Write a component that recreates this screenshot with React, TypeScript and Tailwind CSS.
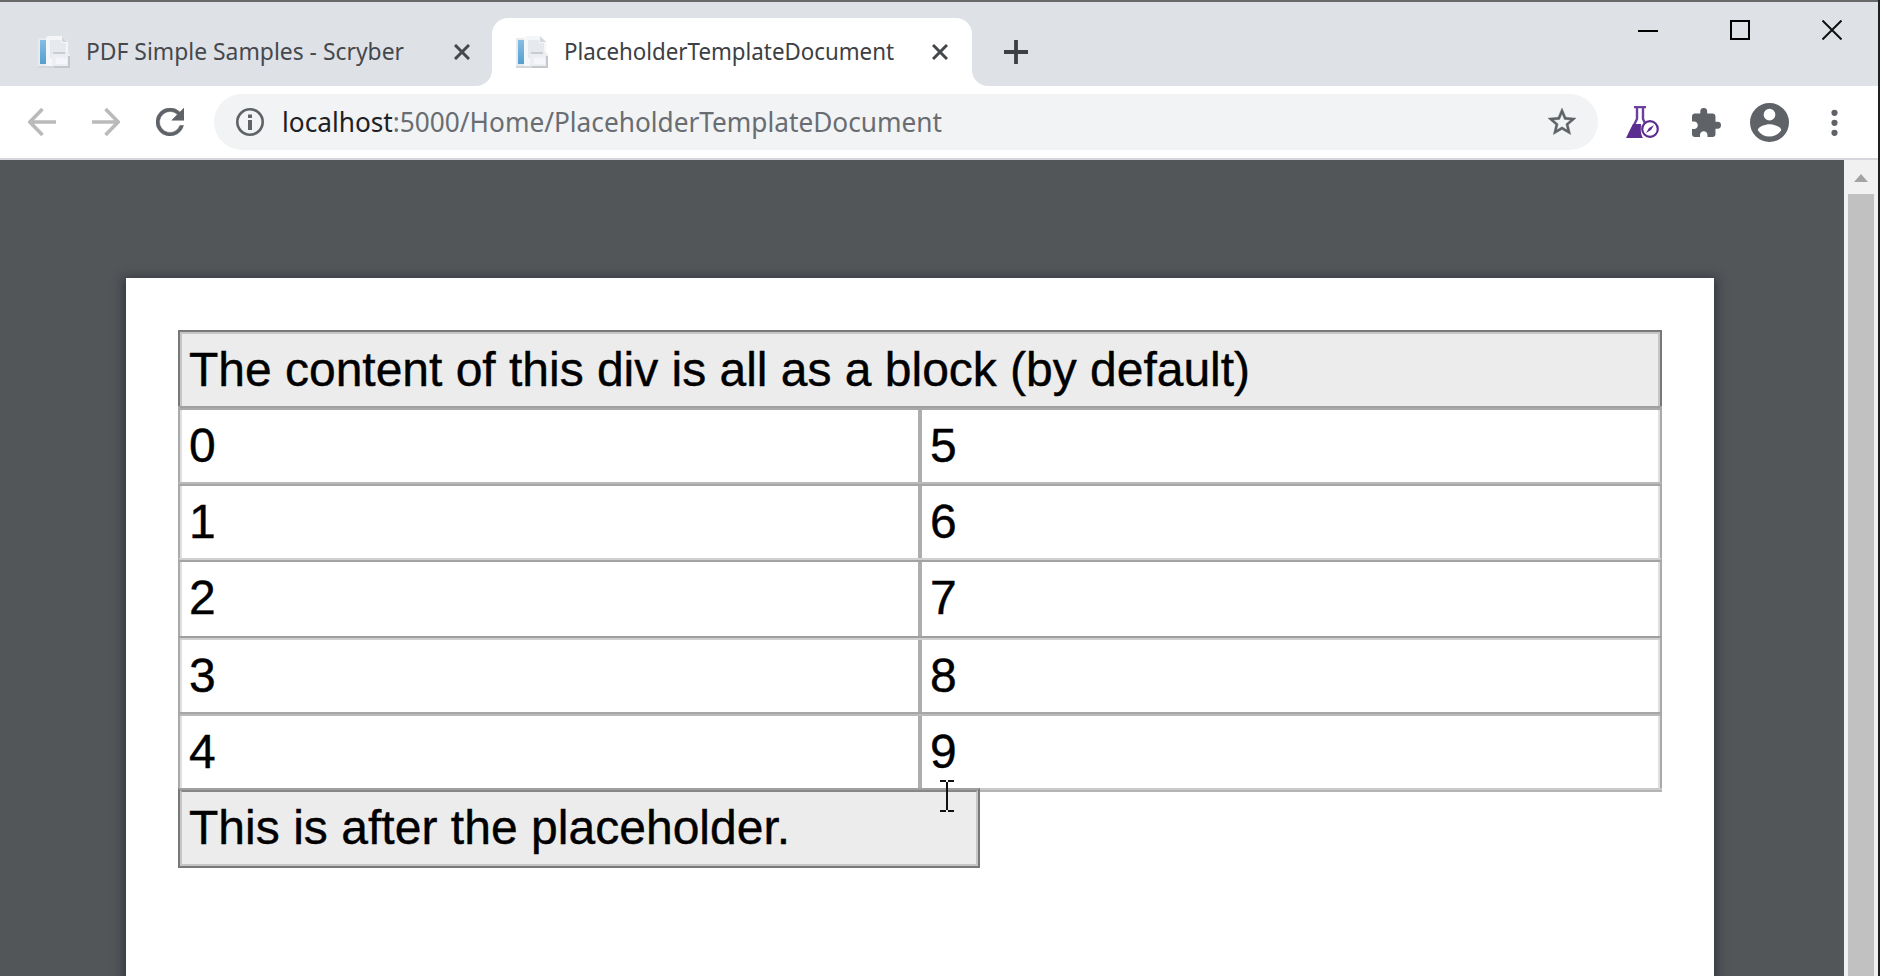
import React from "react";

const Favicon = ({ id }: { id: string }) => (
  <svg className="block h-[32px] w-[32px] shrink-0" viewBox="0 0 32 32">
    <defs>
      <linearGradient id={id} x1="0" y1="0" x2="0" y2="1">
        <stop offset="0" stopColor="#86bde3" />
        <stop offset="1" stopColor="#549fd0" />
      </linearGradient>
    </defs>
    <path d="M0 2h10v30H0z" fill="#e8ebee" />
    <path d="M2 4h6v24H2z" fill={`url(#${id})`} />
    <path d="M8 2l2-2h14l6 5v26H8z" fill="#f5f6f8" />
    <path d="M24 0l6 6h-6z" fill="#d6d8db" />
    <path d="M12 4h11v3h5v9H16v6h-4z" fill="#e6e9ee" />
    <path d="M14 18l2-2h14l2 3v13H14z" fill="#eceef1" />
    <path d="M15 16h12v2H15z" fill="#c9ccd1" />
    <path d="M18 22h11v6H18z" fill="#f5f6fb" />
    <path d="M0 30h16v2H0z" fill="#d3d6da" />
    <path d="M16 30h16v2H16zM30 20h2v10h-2z" fill="#c4c7cb" />
  </svg>
);

const TabClose = () => (
  <svg className="block h-[16px] w-[16px] shrink-0" viewBox="0 0 16 16">
    <path d="M1 1l14 14M15 1L1 15" stroke="#45484c" strokeWidth="3" fill="none" />
  </svg>
);

const rows = [
  { left: "0", right: "5", height: "h-[76px]", line: "border-t-[#a0a0a0]", inner: "border-t-[#a9a9a9]" },
  { left: "1", right: "6", height: "h-[76px]", line: "border-t-[#bababa]", inner: "border-t-[#a6a6a6]" },
  { left: "2", right: "7", height: "h-[78px]", line: "border-t-[#d0d0d0]", inner: "border-t-[#a3a3a3]" },
  { left: "3", right: "8", height: "h-[76px]", line: "border-t-[#9f9f9f]", inner: "border-t-[#cfcfcf]" },
  { left: "4", right: "9", height: "h-[76px]", line: "border-t-[#a6a6a6]", inner: "border-t-[#bababa]" },
];

function TabStrip() {
  return (
    <div className="flex h-[84px] items-end bg-[#dee1e6]">
      <div className="flex h-[68px] w-[492px] items-center pl-[38px]">
        <Favicon id="spine-a" />
        <svg className="ml-[16px] block h-[40px] w-[322px] shrink-0 overflow-visible">
          <text x="0" y="28" textLength="318" lengthAdjust="spacingAndGlyphs" fontSize="24" fill="#45484d">PDF Simple Samples - Scryber</text>
        </svg>
        <span className="ml-[46px]"><TabClose /></span>
      </div>
      <div className="relative flex h-[68px] w-[480px] items-center rounded-t-[16px] bg-white pl-[24px]">
        <svg className="absolute bottom-0 left-[-16px] h-[16px] w-[16px]" viewBox="0 0 16 16"><path d="M16 0v16H0A16 16 0 0 0 16 0z" fill="#fff" /></svg>
        <svg className="absolute right-[-16px] bottom-0 h-[16px] w-[16px]" viewBox="0 0 16 16"><path d="M0 0v16h16A16 16 0 0 1 0 0z" fill="#fff" /></svg>
        <Favicon id="spine-b" />
        <svg className="ml-[16px] block h-[40px] w-[332px] shrink-0 overflow-visible">
          <text x="0" y="28" textLength="330" lengthAdjust="spacingAndGlyphs" fontSize="24" fill="#3c4043">PlaceholderTemplateDocument</text>
        </svg>
        <span className="ml-[36px]"><TabClose /></span>
      </div>
      <div className="flex h-[68px] items-center pl-[32px]">
        <svg className="block h-[24px] w-[24px]" viewBox="0 0 24 24"><path d="M12 0v24M0 12h24" stroke="#3c4043" strokeWidth="3.8" /></svg>
      </div>
      <div className="ml-auto flex h-[84px] items-start gap-[72px] pt-[18px] pr-[36px]">
        <svg className="block h-[20px] w-[20px]" viewBox="0 0 20 20"><path d="M0 11h20" stroke="#000" strokeWidth="2" /></svg>
        <svg className="block h-[20px] w-[20px]" viewBox="0 0 20 20"><path d="M1 1h18v18H1z" stroke="#000" strokeWidth="2" fill="none" /></svg>
        <svg className="block h-[20px] w-[20px]" viewBox="0 0 20 20"><path d="M0.5 0.5l19 19M19.5 0.5l-19 19" stroke="#111" strokeWidth="2" /></svg>
      </div>
    </div>
  );
}

function Toolbar() {
  return (
    <div className="flex h-[74px] items-center border-b-2 border-[#d5d7dc] bg-white pl-[28px]">
      <svg className="block h-[28px] w-[28px]" viewBox="0 0 28 28"><path d="M28 14H3M14.5 1L1.8 14l12.7 13" stroke="#bababa" strokeWidth="3.6" fill="none" /></svg>
      <svg className="ml-[36px] block h-[28px] w-[28px]" viewBox="0 0 28 28"><path d="M0 14h25M13.5 1l12.7 13-12.7 13" stroke="#bababa" strokeWidth="3.6" fill="none" /></svg>
      <svg className="ml-[36px] block h-[28px] w-[28px]" viewBox="4 4 16 16"><path fill="#5f6368" d="M17.65 6.35A7.96 7.96 0 0 0 12 4a8 8 0 1 0 7.73 10h-2.08A6 6 0 1 1 12 6c1.66 0 3.14.69 4.22 1.78L13 11h7V4z" stroke="#5f6368" strokeWidth="0.3" /></svg>
      <div className="ml-[30px] flex h-[56px] w-[1384px] items-center rounded-full bg-[#f1f3f4] pl-[22px]">
        <svg className="block h-[28px] w-[28px]" viewBox="0 0 28 28"><circle cx="14" cy="14" r="12.7" stroke="#5f6368" strokeWidth="2.6" fill="none" /><path d="M12 6.5h4v3.5h-4zM12 12h4v10h-4z" fill="#5f6368" /></svg>
        <svg className="ml-[18px] block h-[44px] w-[664px] overflow-visible">
          <text x="0" y="32" textLength="660" lengthAdjust="spacingAndGlyphs" fontSize="28" fill="#696d72"><tspan fill="#202124">localhost</tspan>:5000/Home/PlaceholderTemplateDocument</text>
        </svg>
        <svg className="ml-auto mr-[22px] block h-[28px] w-[28px]" viewBox="2 2 20 20"><path fill="#5f6368" stroke="#5f6368" strokeWidth="0.3" d="M22 9.24l-7.19-.62L12 2 9.19 8.63 2 9.24l5.46 4.73L5.82 21 12 17.27 18.18 21l-1.63-7.03L22 9.24zM12 15.4l-3.76 2.27 1-4.28-3.32-2.88 4.38-.38L12 6.1l1.71 4.04 4.38.38-3.32 2.88 1 4.28L12 15.4z" /></svg>
      </div>
      <svg className="ml-[28px] block h-[32px] w-[33px]" viewBox="0 0 33 32">
        <path d="M8 1h12M11 2v11L3 29M17 2v11l2 4" stroke="#6b3fa0" strokeWidth="2.4" fill="none" />
        <path d="M0 32L7 18h8c0 4-1 9 2 14z" fill="#5c2d91" />
        <circle cx="24" cy="23" r="7.8" fill="#fff" stroke="#5c2d91" strokeWidth="2.2" />
        <path d="M20 27l3-5 5-3-3 5z" fill="#5c2d91" />
      </svg>
      <svg className="ml-[33px] block h-[29px] w-[29px]" viewBox="2 1 21 21"><path fill="#5f6368" d="M20.5 11H19V7c0-1.1-.9-2-2-2h-4V3.5a2.5 2.5 0 0 0-5 0V5H4c-1.1 0-1.99.9-1.99 2v3.8H3.5c1.49 0 2.7 1.21 2.7 2.7s-1.21 2.7-2.7 2.7H2V20c0 1.1.9 2 2 2h3.8v-1.5c0-1.49 1.21-2.7 2.7-2.7s2.7 1.21 2.7 2.7V22H17c1.1 0 2-.9 2-2v-4h1.5a2.5 2.5 0 0 0 0-5z" /></svg>
      <svg className="ml-[29px] block h-[39px] w-[39px]" viewBox="2 2 20 20"><path fill="#5f6368" d="M12 2a10 10 0 1 0 0 20 10 10 0 0 0 0-20zm0 3a3 3 0 1 1 0 6 3 3 0 0 1 0-6zm0 14.2a7.2 7.2 0 0 1-6-3.22c.03-1.99 4-3.08 6-3.08s5.97 1.09 6 3.08a7.2 7.2 0 0 1-6 3.22z" /></svg>
      <svg className="ml-[42px] block h-[27px] w-[7px]" viewBox="0 0 7 27"><g fill="#5f6368"><circle cx="3.5" cy="3.8" r="3.1" /><circle cx="3.5" cy="13.8" r="3.1" /><circle cx="3.5" cy="23.8" r="3.1" /></g></svg>
    </div>
  );
}

export default function App() {
  return (
    <div className="flex h-[976px] w-[1880px] overflow-hidden bg-[#1f2022] font-['Noto_Sans',sans-serif]">
      <div className="flex w-[1878px] flex-col">
        <div className="h-[2px] bg-[#696969]" />
        <TabStrip />
        <Toolbar />
        <div className="flex min-h-0 flex-1">
          <div className="h-full w-[1844px] overflow-hidden bg-[#525659] pt-[118px] pl-[126px] font-['Liberation_Sans',sans-serif] text-[48px] text-black [-webkit-text-stroke:0.4px_#000]">
            <div className="h-[760px] w-[1588px] bg-white pt-[52px] pl-[52px] shadow-[0_2px_10px_2px_rgba(20,20,30,0.55)]">
              <div className="relative w-[1484px]">
                <div className="h-[76px] border-x-2 border-t-2 border-[#787878] bg-[#ececec]">
                  <div className="flex h-full items-center border-x-2 border-t-2 border-[#c6c6c6] pl-[7px]">
                    <span className="leading-none tracking-[-0.015px] whitespace-nowrap">The content of this div is all as a block (by default)</span>
                  </div>
                </div>
                {rows.map((r) => (
                  <div key={r.left} className={`border-x-2 border-t-2 border-x-[#a9a9a9] ${r.line} ${r.height}`}>
                    <div className={`flex h-full border-t-2 ${r.inner}`}>
                      <div className="w-[738px] border-l-2 border-[#e0e0e0] pt-[12px] pl-[7px] leading-none">{r.left}</div>
                      <div className="flex-1 border-r-2 border-l-4 border-r-[#e0e0e0] border-l-[#adadad] pt-[12px] pl-[8px] leading-none">{r.right}</div>
                    </div>
                  </div>
                ))}
                <div className="h-[4px] border-t-2 border-b-2 border-t-[#cacaca] border-b-[#b4b4b4]" />
                <div className="relative -mt-[4px] h-[80px] w-[802px] border-x-2 border-t-2 border-b-2 border-[#787878] border-t-[#a0a0a0] bg-[#ececec]">
                  <div className="flex h-full items-center border-2 border-[#c6c6c6] border-t-[#878787] pl-[7px]">
                    <span className="leading-none tracking-[0.03px] whitespace-nowrap">This is after the placeholder.</span>
                  </div>
                </div>
                <svg className="absolute top-[450px] left-[762px] h-[32px] w-[14px]" viewBox="0 0 14 32"><path d="M0 1h6M8 1h6M7 2v28M0 31h6M8 31h6" stroke="#111" strokeWidth="2" /></svg>
              </div>
            </div>
          </div>
          <div className="flex w-[34px] flex-col items-center bg-[#f1f1f1] pt-[14px]">
            <svg className="block h-[8px] w-[14px]" viewBox="0 0 14 8"><path d="M7 0l7 8H0z" fill="#a3a3a3" /></svg>
            <div className="mt-[12px] w-[26px] flex-1 bg-[#c1c1c1]" />
          </div>
        </div>
      </div>
    </div>
  );
}
